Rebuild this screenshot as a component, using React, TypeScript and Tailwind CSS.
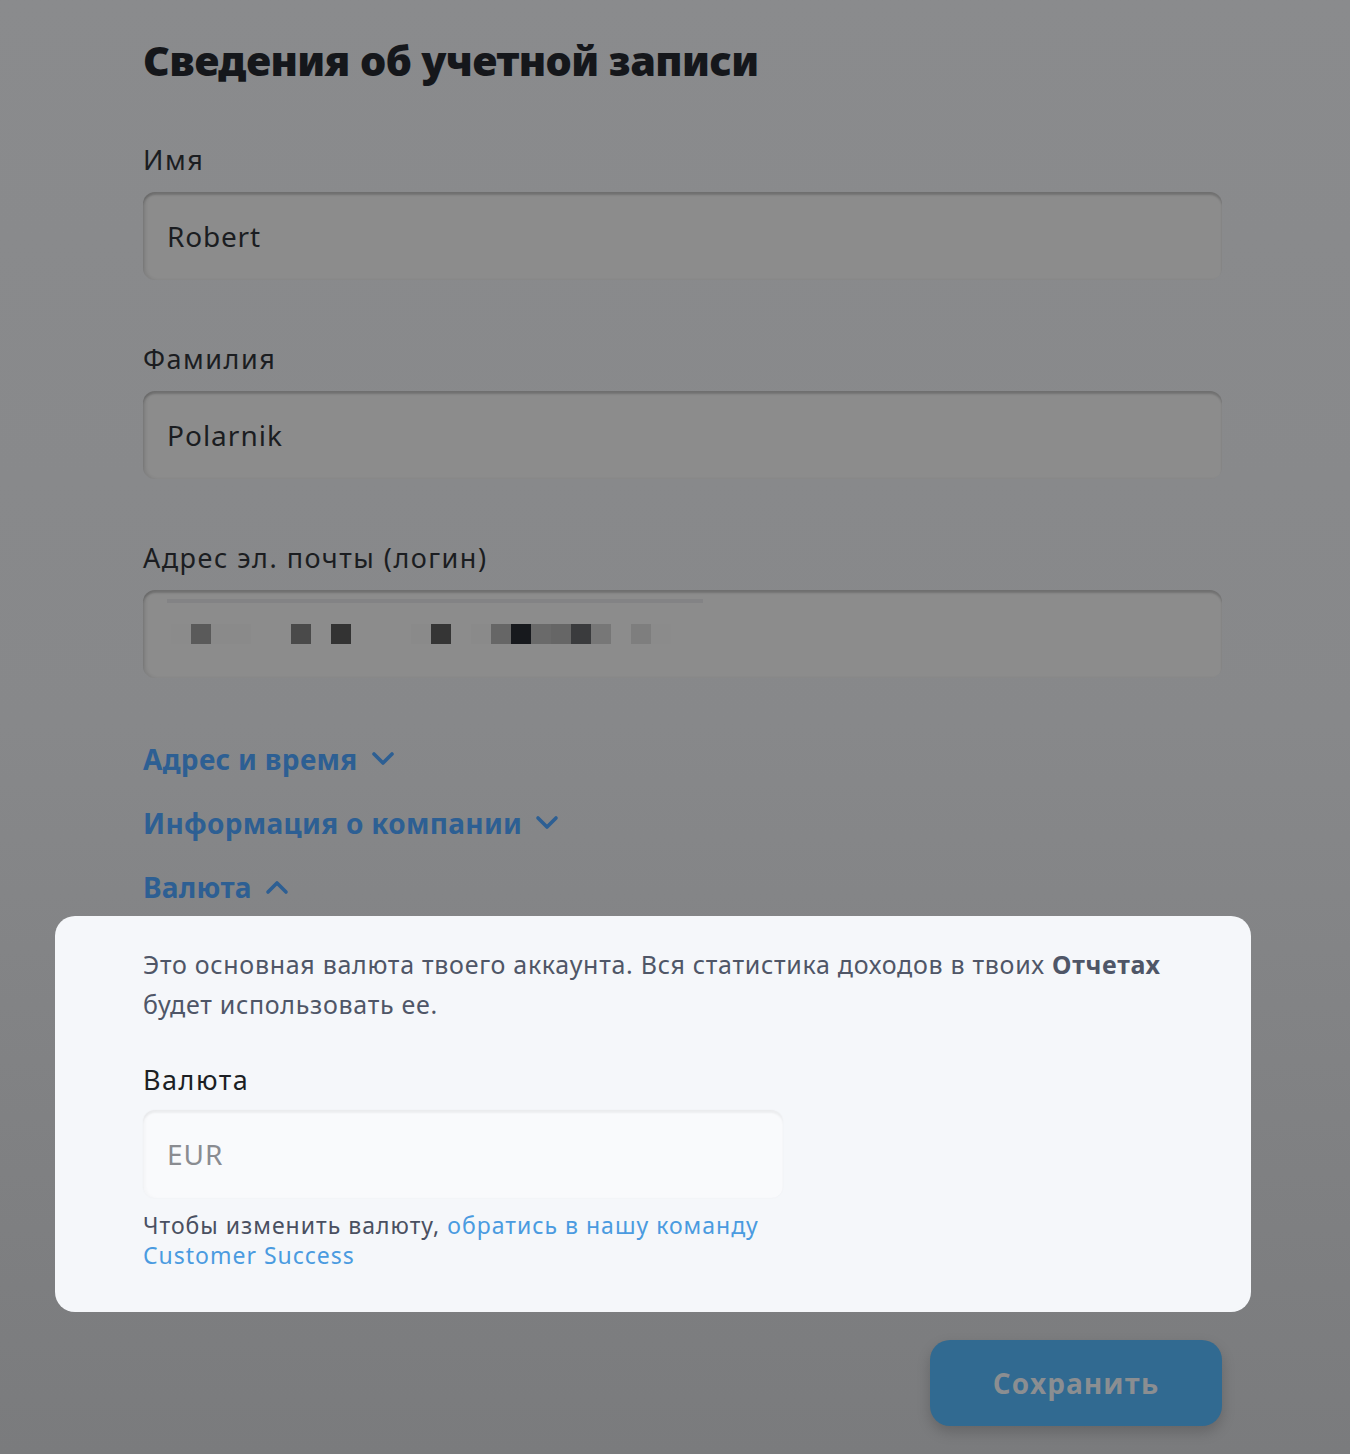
import React from "react";

const Chevron = ({ up = false }: { up?: boolean }) => (
  <svg width="24" height="16" viewBox="0 0 24 16" fill="none" className="ml-[13px]">
    <path
      d={up ? "M3 13 L12 4 L21 13" : "M3 3 L12 12 L21 3"}
      stroke="#2d5f93"
      strokeWidth="3.6"
      strokeLinecap="round"
      strokeLinejoin="round"
    />
  </svg>
);

const pixels: [number, string][] = [
  [0, "#8b8b8b"],
  [1, "#5a5a5a"],
  [2, "#8a8a8a"],
  [3, "#8a8a8a"],
  [6, "#4a4a4a"],
  [8, "#333333"],
  [12, "#8a8a8a"],
  [13, "#353535"],
  [15, "#8a8a8a"],
  [16, "#666666"],
  [17, "#17191d"],
  [18, "#6a6a6a"],
  [19, "#666666"],
  [20, "#3a3b3d"],
  [21, "#777777"],
  [23, "#7e7e7e"],
  [24, "#8b8b8b"],
];

const Field = ({ label, children }: { label: string; children: React.ReactNode }) => (
  <div className="flex flex-col">
    <div className="text-[27px] leading-[32px] text-[#1b1d21] tracking-[1.5px]">{label}</div>
    <div className="mt-[16px] h-[88px] rounded-[12px] bg-[#8c8c8c] shadow-[inset_0_3px_2px_rgba(0,0,0,0.18),inset_3px_0_3px_rgba(0,0,0,0.08)] relative">
      {children}
    </div>
  </div>
);

export default function App() {
  return (
    <div
      className="min-h-[1454px] w-full bg-gradient-to-b from-[#8a8b8d] via-[#87888a] to-[#7a7b7d] overflow-hidden"
      style={{ fontFamily: '"Noto Sans", "Open Sans", sans-serif' }}
    >
      <div className="ml-[143px] w-[1079px] pt-[30px] flex flex-col">
        <h1 className="text-[41.5px] leading-[60px] font-black text-[#15171b] tracking-[-0.6px]">
          Сведения об учетной записи
        </h1>

        <div className="mt-[54px] flex flex-col gap-[63px]">
          <Field label="Имя">
            <div className="absolute left-[24px] top-0 h-full flex items-center text-[28px] text-[#1b1d21] tracking-[0.8px]">
              Robert
            </div>
          </Field>
          <Field label="Фамилия">
            <div className="absolute left-[24px] top-0 h-full flex items-center text-[28px] text-[#1b1d21] tracking-[1px]">
              Polarnik
            </div>
          </Field>
          <Field label="Адрес эл. почты (логин)">
            <div className="absolute left-[24px] top-[9px] h-[4px] w-[536px] bg-[#838385]" />
            <div className="absolute left-[28px] top-[34px] h-[20px] w-[520px]">
              {pixels.map(([i, c]) => (
                <div
                  key={i}
                  className="absolute top-0 h-[20px] w-[20px]"
                  style={{ left: i * 20, backgroundColor: c }}
                />
              ))}
            </div>
          </Field>
        </div>

        <div className="mt-[64px] flex flex-col gap-[30px]">
          <div className="flex items-center h-[34px] text-[28px] font-bold text-[#2d5f93] tracking-[0.3px]">
            Адрес и время
            <Chevron />
          </div>
          <div className="flex items-center h-[34px] text-[28px] font-bold text-[#2d5f93] tracking-[0.3px]">
            Информация о компании
            <Chevron />
          </div>
          <div className="flex items-center h-[34px] text-[28px] font-bold text-[#2d5f93] tracking-[0.3px]">
            Валюта
            <Chevron up />
          </div>
        </div>

        <div className="ml-[-88px] w-[1196px] mt-[12px] rounded-[20px] bg-[#f5f7fa] pl-[88px] pr-[40px] pt-[28px] pb-[42px]">
          <p className="text-[25px] leading-[40px] text-[#4f5667] tracking-[0.7px] w-[1060px]">
            Это основная валюта твоего аккаунта. Вся статистика доходов в твоих{" "}
            <span className="font-bold">Отчетах</span> будет использовать ее.
          </p>
          <div className="mt-[40px] text-[27px] leading-[32px] text-[#1c1f24] tracking-[1.5px]">Валюта</div>
          <div className="mt-[14px] w-[640px] h-[88px] rounded-[12px] bg-[#f9fafc] shadow-[inset_0_3px_2px_rgba(0,0,0,0.05),inset_3px_0_3px_rgba(0,0,0,0.02),0_0_2px_rgba(0,0,0,0.04)] flex items-center pl-[24px] text-[28px] text-[#8a8c91] tracking-[1px]">
            EUR
          </div>
          <p className="mt-[12px] w-[640px] text-[23px] leading-[30px] text-[#4a5061] tracking-[1px]">
            Чтобы изменить валюту,{" "}
            <span className="text-[#4a9be0]">обратись в нашу команду Customer Success</span>
          </p>
        </div>

        <div className="mt-[28px] flex justify-end">
          <div
            className="w-[292px] h-[86px] rounded-[20px] bg-[#316a91] shadow-[0_6px_14px_rgba(0,0,0,0.18)] flex items-center justify-center text-[28px] font-bold text-[#8b8e91] tracking-[1px]"
            style={{ fontFamily: '"Open Sans", "Noto Sans", sans-serif' }}
          >
            Сохранить
          </div>
        </div>
      </div>
    </div>
  );
}
